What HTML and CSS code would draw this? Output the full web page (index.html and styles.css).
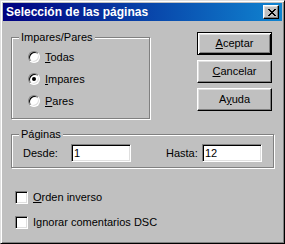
FILE: index.html
```html
<!DOCTYPE html>
<html lang="es">
<head>
<meta charset="utf-8">
<title>Selección de las páginas</title>
<link rel="stylesheet" href="styles.css">
</head>
<body>
<div class="window">
  <div class="titlebar">
    <span class="title">Selección de las páginas</span>
    <span class="close" aria-label="Cerrar">
      <svg width="8" height="7" viewBox="0 0 8 7" shape-rendering="crispEdges">
        <path fill="#000" d="M0 0h2v1h-2zM6 0h2v1h-2zM1 1h2v1h-2zM5 1h2v1h-2zM2 2h4v1h-4zM3 3h2v1h-2zM2 4h4v1h-4zM1 5h2v1h-2zM5 5h2v1h-2zM0 6h2v1h-2zM6 6h2v1h-2z"/>
      </svg>
    </span>
  </div>
  <div class="content">
    <div class="top">
      <fieldset class="group parity">
        <legend>Impares/Pares</legend>
        <div class="options">
          <div class="option"><span class="radio"></span><span><u>T</u>odas</span></div>
          <div class="option"><span class="radio checked"></span><span><u>I</u>mpares</span></div>
          <div class="option"><span class="radio"></span><span><u>P</u>ares</span></div>
        </div>
      </fieldset>
      <div class="buttons">
        <div class="btn default"><u>A</u>ceptar</div>
        <div class="btn"><u>C</u>ancelar</div>
        <div class="btn">A<u>y</u>uda</div>
      </div>
    </div>
    <fieldset class="group pages">
      <legend>Páginas</legend>
      <div class="range">
        <span class="lbl from">Desde:</span>
        <span class="field">1</span>
        <span class="lbl to">Hasta:</span>
        <span class="field">12</span>
      </div>
    </fieldset>
    <div class="checks">
      <div class="option"><span class="check"></span><span><u>O</u>rden inverso</span></div>
      <div class="option"><span class="check"></span><span>Ignorar comentarios DSC</span></div>
    </div>
  </div>
</div>
</body>
</html>
```
FILE: styles.css
```css
* { box-sizing: border-box; }
html, body { margin: 0; padding: 0; background: #c0c0c0; }
body {
  font-family: "Liberation Sans", Arial, sans-serif;
  font-size: 11px;
  line-height: 13px;
  color: #000;
}
.window {
  width: 285px;
  height: 244px;
  background: #c0c0c0;
  border: 1px solid;
  border-color: #dfdfdf #000 #000 #dfdfdf;
  box-shadow: inset 1px 1px #fff, inset -1px -1px #808080;
  padding: 2px;
}
.titlebar {
  height: 18px;
  display: flex;
  align-items: center;
  justify-content: space-between;
  padding: 0 3px 0 3px;
  background: linear-gradient(to right, #000080, #1084d0);
}
.title {
  color: #fff;
  font-weight: bold;
  font-size: 12px;
  line-height: 14px;
}
.close {
  width: 16px;
  height: 14px;
  display: flex;
  align-items: center;
  justify-content: center;
  background: #c0c0c0;
  border: 1px solid;
  border-color: #fff #000 #000 #fff;
  box-shadow: inset -1px -1px #808080, inset 1px 1px #dfdfdf;
  padding: 0 0 0 1px;
}
.close svg { display: block; }
.content { padding: 0 8px; }
.top {
  display: flex;
  justify-content: space-between;
  align-items: flex-start;
}
.group {
  margin: 0;
  border: 1px solid #808080;
  box-shadow: inset 1px 1px #fff, 1px 1px #fff;
  min-width: 0;
}
.group legend {
  padding: 0 2px;
  margin-left: 7px;
  background: #c0c0c0;
}
.parity {
  width: 139px;
  margin-top: 10px;
  padding: 2px 0 6px 0;
}
.options { padding-left: 16px; }
.option {
  display: flex;
  align-items: center;
}
.options .option { height: 22px; }
.radio {
  width: 12px;
  height: 12px;
  border-radius: 50%;
  background: #fff;
  border: 1px solid;
  border-color: #808080 #fff #fff #808080;
  box-shadow: inset 1px 1px #000, inset -1px -1px #dfdfdf;
  margin-right: 5px;
  display: flex;
  align-items: center;
  justify-content: center;
  flex: none;
}
.radio.checked::after {
  content: "";
  width: 4px;
  height: 4px;
  border-radius: 50%;
  background: #000;
}
.buttons {
  display: flex;
  flex-direction: column;
  gap: 5px;
  margin-top: 11px;
  margin-right: 2px;
}
.btn {
  width: 75px;
  height: 23px;
  display: flex;
  align-items: center;
  justify-content: center;
  background: #c0c0c0;
  border: 1px solid;
  border-color: #fff #000 #000 #fff;
  box-shadow: inset -1px -1px #808080, inset 1px 1px #dfdfdf;
}
.btn.default {
  border-color: #000;
  box-shadow: inset 1px 1px #fff, inset -1px -1px #000, inset 2px 2px #dfdfdf, inset -2px -2px #808080;
}
.pages {
  margin-top: 9px;
  padding: 3px 0 5px 0;
}
.range {
  display: flex;
  align-items: center;
  padding-left: 11px;
}
.lbl.from { width: 48px; }
.lbl.to { width: 36px; margin-left: 35px; }
.field {
  width: 60px;
  height: 18px;
  background: #fff;
  border: 1px solid;
  border-color: #808080 #fff #fff #808080;
  box-shadow: inset 1px 1px #000, inset -1px -1px #dfdfdf;
  padding: 2px 2px 0 2px;
}
.checks {
  margin-top: 23px;
  padding-left: 4px;
  display: flex;
  flex-direction: column;
  gap: 12px;
}
.checks .option { height: 13px; }
.check {
  width: 13px;
  height: 13px;
  background: #fff;
  border: 1px solid;
  border-color: #808080 #fff #fff #808080;
  box-shadow: inset 1px 1px #000, inset -1px -1px #dfdfdf;
  margin-right: 5px;
  flex: none;
}
```
